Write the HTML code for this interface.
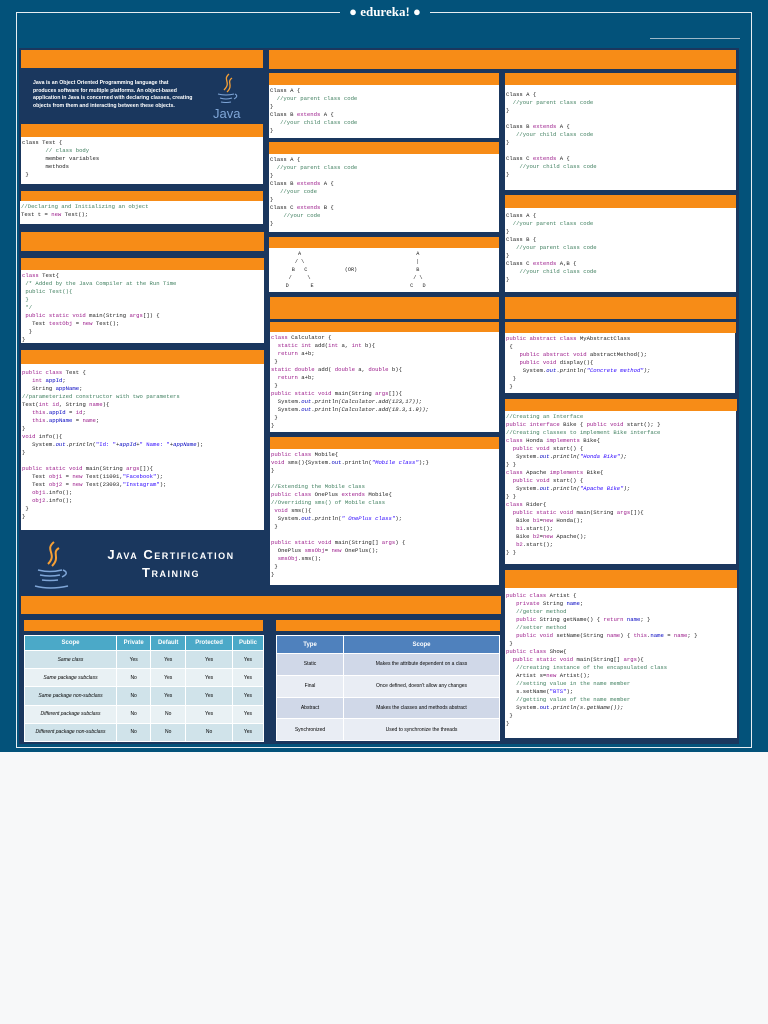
<!DOCTYPE html>
<html><head><meta charset="utf-8"><style>
*{margin:0;padding:0;box-sizing:border-box}
body{width:768px;height:1024px;background:#f7f8f9;position:relative;overflow:hidden;font-family:"Liberation Sans",sans-serif}
#top{position:absolute;left:0;top:0;width:768px;height:752px;background:#03527a}
.frame{position:absolute;left:16px;top:12px;width:736px;height:736px;border:1px solid #e8eef2}
.logo{position:absolute;left:340px;top:4px;width:90px;height:18px;background:#03527a;color:#fff;font:bold 13px "Liberation Serif",serif;text-align:center}
.navy{position:absolute;background:#1a375e}
.o{position:absolute;background:#f78c17}
.w{position:absolute;background:#fff;font:5.6px/8px "Liberation Mono",monospace;color:#222;white-space:pre;overflow:hidden;padding:2px 1px}
.k{color:#9b1a8a}.c{color:#3f7f5f}.s{color:#2a00ff}.f{color:#0000c0}.i{font-style:italic}
table{border-collapse:collapse;font-size:5px;text-align:center;position:absolute}
td,th{border:1px solid #fff}
th{color:#fff;font-weight:bold;font-size:6px}
</style></head><body>
<div id="top"></div>
<div class="frame"></div>
<div class="logo">● edureka! ●</div>
<div style="position:absolute;left:650px;top:38px;width:90px;height:1px;background:#9db8c8"></div>
<div class="navy" style="left:19px;top:48px;width:720px;height:696px"></div>

<!-- left column -->
<div class="o" style="left:21px;top:50px;width:242px;height:18px"></div>
<div class="navy" style="left:21px;top:68px;width:242px;height:56px"></div>
<div style="position:absolute;left:33px;top:80px;width:160px;color:#fff;font:bold 5.2px/7.6px 'Liberation Sans',sans-serif">Java is an Object Oriented Programming language that produces software for multiple platforms. An object-based application in Java is concerned with declaring classes, creating objects from them and interacting between these objects.</div>
<svg style="position:absolute;left:212px;top:72px" width="30" height="50" viewBox="0 0 30 50">
<path d="M17 2 C10 8 20 10 12 18 M20 6 C14 10 22 13 15 20" stroke="#f7a035" stroke-width="1.3" fill="none"/>
<path d="M6 22 Q14 24 22 22 M8 26 Q14 28 20 26 M9 30 Q14 31 19 30 M23 22 Q27 24 22 27" stroke="#7fa6d8" stroke-width="1" fill="none"/>
<text x="1" y="46" fill="#7fa6d8" font-family="Liberation Sans" font-size="13">Java</text>
</svg>
<div class="o" style="left:21px;top:124px;width:242px;height:13px"></div>
<div class="w" style="left:21px;top:137px;width:242px;height:47px">class Test {
       <span class="c">// class body</span>
       member variables
       methods
 }</div>
<div class="o" style="left:21px;top:191px;width:242px;height:10px"></div>
<div class="w" style="left:20px;top:201px;width:243px;height:23px"><span class="c">//Declaring and Initializing an object</span>
Test t = <span class="k">new</span> Test();</div>
<div class="o" style="left:21px;top:232px;width:243px;height:19px"></div>
<div class="o" style="left:21px;top:258px;width:243px;height:12px"></div>
<div class="w" style="left:21px;top:270px;width:243px;height:73px"><span class="k">class</span> Test{
 <span class="c">/* Added by the Java Compiler at the Run Time
 public Test(){
 }
 */</span>
 <span class="k">public static void</span> main(String <span class="k">args</span>[]) {
   Test <span class="k">testObj</span> = <span class="k">new</span> Test();
  }
}</div>
<div class="o" style="left:21px;top:350px;width:243px;height:14px"></div>
<div class="w" style="left:21px;top:364px;width:243px;height:166px;padding-top:5px"><span class="k">public class</span> Test {
   <span class="k">int</span> <span class="f">appId</span>;
   String <span class="f">appName</span>;
<span class="c">//parameterized constructor with two parameters</span>
Test(<span class="k">int</span> <span class="k">id</span>, String <span class="k">name</span>){
   <span class="k">this</span>.<span class="f">appId</span> = <span class="k">id</span>;
   <span class="k">this</span>.<span class="f">appName</span> = <span class="k">name</span>;
}
<span class="k">void</span> info(){
   System.<span class="f i">out</span>.<span class="i">println</span>(<span class="s">"Id: "</span>+<span class="f i">appId</span>+<span class="s">" Name: "</span>+<span class="f i">appName</span>);
}

<span class="k">public static void</span> main(String <span class="k">args</span>[]){
   Test <span class="k">obj1</span> = <span class="k">new</span> Test(11001,<span class="s">"Facebook"</span>);
   Test <span class="k">obj2</span> = <span class="k">new</span> Test(23003,<span class="s">"Instagram"</span>);
   <span class="k">obj1</span>.info();
   <span class="k">obj2</span>.info();
 }
}</div>
<svg style="position:absolute;left:32px;top:540px" width="42" height="52" viewBox="0 0 42 52">
<path d="M22 2 C12 10 26 14 16 24 M27 8 C19 13 29 17 20 26" stroke="#f7a035" stroke-width="2" fill="none"/>
<path d="M6 30 Q18 33 30 30 M8 35 Q18 37 28 35 M10 40 Q18 41 26 40 M31 30 Q38 33 30 37 M3 46 Q18 50 36 46" stroke="#7fa6d8" stroke-width="1.5" fill="none"/>
</svg>
<div style="position:absolute;left:76px;top:546px;width:190px;text-align:center;color:#fff;font:bold 13px/18px 'Liberation Sans',sans-serif;letter-spacing:1.5px;font-variant:small-caps">Java Certification<br>Training</div>

<div class="o" style="left:21px;top:596px;width:480px;height:18px"></div>
<div class="o" style="left:24px;top:620px;width:239px;height:11px"></div>
<div class="o" style="left:276px;top:620px;width:224px;height:11px"></div>
<table style="left:24px;top:635px;width:240px;height:107px">
<tr style="background:#4ba9c8;height:15px"><th style="width:92px">Scope</th><th>Private</th><th>Default</th><th>Protected</th><th>Public</th></tr>
<tr style="background:#d0e3ea"><td class="i">Same class</td><td>Yes</td><td>Yes</td><td>Yes</td><td>Yes</td></tr>
<tr style="background:#e9f1f4"><td class="i">Same package subclass</td><td>No</td><td>Yes</td><td>Yes</td><td>Yes</td></tr>
<tr style="background:#d0e3ea"><td class="i">Same package non-subclass</td><td>No</td><td>Yes</td><td>Yes</td><td>Yes</td></tr>
<tr style="background:#e9f1f4"><td class="i">Different package subclass</td><td>No</td><td>No</td><td>Yes</td><td>Yes</td></tr>
<tr style="background:#d0e3ea"><td class="i">Different package non-subclass</td><td>No</td><td>No</td><td>No</td><td>Yes</td></tr>
</table>
<table style="left:276px;top:635px;width:224px;height:106px">
<tr style="background:#4f81bd;height:18px"><th style="width:67px">Type</th><th>Scope</th></tr>
<tr style="background:#d0d8e8"><td>Static</td><td>Makes the attribute dependent on a class</td></tr>
<tr style="background:#e9edf4"><td>Final</td><td>Once defined, doesn't allow any changes</td></tr>
<tr style="background:#d0d8e8"><td>Abstract</td><td>Makes the classes and methods abstract</td></tr>
<tr style="background:#e9edf4"><td>Synchronized</td><td>Used to synchronize  the threads</td></tr>
</table>

<!-- middle column -->
<div class="o" style="left:269px;top:50px;width:467px;height:19px"></div>
<div class="o" style="left:269px;top:73px;width:230px;height:12px"></div>
<div class="w" style="left:269px;top:85px;width:230px;height:53px">Class A {
  <span class="c">//your parent class code</span>
}
Class B <span class="k">extends</span> A {
   <span class="c">//your child class code</span>
}</div>
<div class="o" style="left:269px;top:142px;width:230px;height:12px"></div>
<div class="w" style="left:269px;top:154px;width:230px;height:78px">Class A {
  <span class="c">//your parent class code</span>
}
Class B <span class="k">extends</span> A {
   <span class="c">//your code</span>
}
Class C <span class="k">extends</span> B {
    <span class="c">//your code</span>
}</div>
<div class="o" style="left:269px;top:237px;width:230px;height:11px"></div>
<div class="w" style="left:269px;top:248px;width:230px;height:44px;font-size:5.2px">         A                                     A
        / \                                    |
       B   C            (OR)                   B
      /     \                                 / \
     D       E                               C   D</div>
<div class="o" style="left:270px;top:297px;width:229px;height:22px"></div>
<div class="o" style="left:270px;top:322px;width:229px;height:10px"></div>
<div class="w" style="left:270px;top:332px;width:229px;height:100px"><span class="k">class</span> Calculator {
  <span class="k">static int</span> add(<span class="k">int</span> a, <span class="k">int</span> b){
  <span class="k">return</span> a+b;
 }
<span class="k">static double</span> add( <span class="k">double</span> a, <span class="k">double</span> b){
  <span class="k">return</span> a+b;
 }
<span class="k">public static void</span> main(String <span class="k">args</span>[]){
  System.<span class="f i">out</span>.<span class="i">println(Calculator.add(123,17));</span>
  System.<span class="f i">out</span>.<span class="i">println(Calculator.add(18.3,1.9));</span>
 }
}</div>
<div class="o" style="left:270px;top:437px;width:229px;height:12px"></div>
<div class="w" style="left:270px;top:449px;width:229px;height:136px"><span class="k">public class</span> Mobile{
<span class="k">void</span> sms(){System.<span class="f">out</span>.println(<span class="s i">"Mobile class"</span>);}
}

<span class="c">//Extending the Mobile class</span>
<span class="k">public class</span> OnePlus <span class="k">extends</span> Mobile{
<span class="c">//Overriding sms() of Mobile class</span>
 <span class="k">void</span> sms(){
  System.<span class="f i">out</span>.<span class="i">println</span>(<span class="s i">" OnePlus class"</span>);
 }

<span class="k">public static void</span> main(String[] <span class="k">args</span>) {
  OnePlus <span class="k">smsObj</span>= <span class="k">new</span> OnePlus();
  <span class="k">smsObj</span>.sms();
 }
}</div>

<!-- right column -->
<div class="o" style="left:505px;top:73px;width:231px;height:12px"></div>
<div class="w" style="left:505px;top:85px;width:231px;height:105px;padding-top:6px">Class A {
  <span class="c">//your parent class code</span>
}

Class B <span class="k">extends</span> A {
   <span class="c">//your child class code</span>
}

Class C <span class="k">extends</span> A {
    <span class="c">//your child class code</span>
}</div>
<div class="o" style="left:505px;top:195px;width:231px;height:13px"></div>
<div class="w" style="left:505px;top:208px;width:231px;height:84px;padding-top:4px">Class A {
  <span class="c">//your parent class code</span>
}
Class B {
   <span class="c">//your parent class code</span>
}
Class C <span class="k">extends</span> A,B {
    <span class="c">//your child class code</span>
}</div>
<div class="o" style="left:505px;top:297px;width:231px;height:22px"></div>
<div class="o" style="left:505px;top:322px;width:231px;height:11px"></div>
<div class="w" style="left:505px;top:333px;width:230px;height:60px"><span class="k">public abstract class</span> MyAbstractClass
 {
    <span class="k">public abstract void</span> abstractMethod();
    <span class="k">public void</span> display(){
     System.<span class="f i">out</span>.<span class="i">println(<span class="s">"Concrete method"</span>);</span>
  }
 }</div>
<div class="o" style="left:505px;top:399px;width:232px;height:12px"></div>
<div class="w" style="left:505px;top:411px;width:231px;height:153px"><span class="c">//Creating an Interface</span>
<span class="k">public interface</span> Bike { <span class="k">public void</span> start(); }
<span class="c">//Creating classes to implement Bike interface</span>
<span class="k">class</span> Honda <span class="k">implements</span> Bike{
  <span class="k">public void</span> start() {
   System.<span class="f i">out</span>.<span class="i">println(<span class="s">"Honda Bike"</span>);</span>
} }
<span class="k">class</span> Apache <span class="k">implements</span> Bike{
  <span class="k">public void</span> start() {
   System.<span class="f i">out</span>.<span class="i">println(<span class="s">"Apache Bike"</span>);</span>
} }
<span class="k">class</span> Rider{
  <span class="k">public static void</span> main(String <span class="k">args</span>[]){
   Bike <span class="k">b1</span>=<span class="k">new</span> Honda();
   <span class="k">b1</span>.start();
   Bike <span class="k">b2</span>=<span class="k">new</span> Apache();
   <span class="k">b2</span>.start();
} }</div>
<div class="o" style="left:505px;top:570px;width:232px;height:18px"></div>
<div class="w" style="left:505px;top:588px;width:232px;height:150px;padding-top:4px"><span class="k">public class</span> Artist {
   <span class="k">private</span> String <span class="f">name</span>;
   <span class="c">//getter method</span>
   <span class="k">public</span> String getName() { <span class="k">return</span> <span class="f">name</span>; }
   <span class="c">//setter method</span>
   <span class="k">public void</span> setName(String <span class="k">name</span>) { <span class="k">this</span>.<span class="f">name</span> = <span class="k">name</span>; }
 }
<span class="k">public class</span> Show{
  <span class="k">public static void</span> main(String[] <span class="k">args</span>){
   <span class="c">//creating instance of the encapsulated class</span>
   Artist s=<span class="k">new</span> Artist();
   <span class="c">//setting value in the name member</span>
   s.setName(<span class="s">"BTS"</span>);
   <span class="c">//getting value of the name member</span>
   System.<span class="f">out</span>.<span class="i">println(s.getName());</span>
 }
}</div>
</body></html>
